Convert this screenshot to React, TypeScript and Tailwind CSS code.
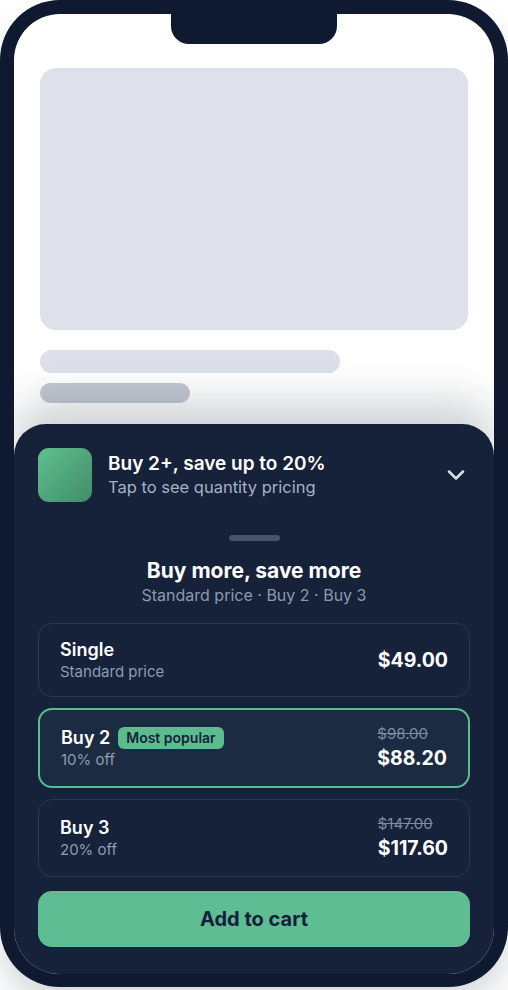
import { ChevronDown } from "lucide-react";

const TIERS = [
  { label: "Single", sub: "Standard price", price: "$49.00", was: null, popular: false },
  { label: "Buy 2", sub: "10% off", price: "$88.20", was: "$98.00", popular: true },
  { label: "Buy 3", sub: "20% off", price: "$117.60", was: "$147.00", popular: false },
];

export default function App() {
  return (
    <div className="w-[508px] h-[990px] bg-white overflow-hidden font-['Inter',sans-serif]">
      <div className="w-[508px] h-[987px] rounded-[60px] bg-[#0f1930] p-[14px] pb-[13px] shadow-[0_18px_30px_rgba(15,23,42,0.16)]">
        <div className="relative h-full rounded-[46px] bg-white overflow-hidden flex flex-col">
          {/* notch */}
          <div className="absolute top-0 left-1/2 -translate-x-1/2 w-[166px] h-[30px] rounded-b-[18px] bg-[#0f1930]" />

          {/* page skeleton */}
          <div className="px-[26px] pt-[54px]">
            <div className="h-[262px] rounded-2xl bg-[#dee1e9]" />
            <div className="mt-5 h-[23px] w-[300px] rounded-full bg-[#dde0e8]" />
            <div className="mt-[10px] h-[20px] w-[150px] rounded-full bg-[#c3c8d2]" />
          </div>

          {/* bottom sheet */}
          <div className="mt-[21px] flex-1 rounded-t-[32px] bg-[#16213a] shadow-[0_-22px_44px_rgba(15,23,42,0.2)] px-6 pt-6">
            <div className="flex items-center">
              <div className="w-[54px] h-[54px] rounded-[11px] bg-linear-to-br from-[#5fc190] to-[#428c68] shrink-0" />
              <div className="ml-4 flex-1">
                <div className="text-[19px] leading-6 font-semibold text-white">Buy 2+, save up to 20%</div>
                <div className="text-[16.5px] leading-[22px] text-[#a6b1c6]">Tap to see quantity pricing</div>
              </div>
              <ChevronDown size={28} strokeWidth={2.2} className="text-[#d9dee8]" />
            </div>

            <div className="mt-[33px] mx-auto w-[51px] h-[6px] rounded-full bg-[#46536f]" />

            <div className="mt-4 text-center">
              <div className="text-[21px] leading-7 font-bold text-white">Buy more, save more</div>
              <div className="text-[16px] leading-5 text-[#8c99b3]">Standard price · Buy 2 · Buy 3</div>
            </div>

            <div className="mt-[18px] flex flex-col gap-[11px]">
              {TIERS.map((t) => (
                <div
                  key={t.label}
                  className={
                    t.popular
                      ? "flex items-center justify-between rounded-[14px] border-2 border-[#5bbd8d] bg-[#1b2c42] px-[21px] py-[14px]"
                      : "flex items-center justify-between rounded-[14px] border-[1.5px] border-[#2b3659] px-[21px] py-[14px]"
                  }
                >
                  <div>
                    <div className="flex items-center gap-2">
                      <span className="text-[18px] leading-6 font-semibold text-white">{t.label}</span>
                      {t.popular && (
                        <span className="rounded-md bg-[#5bbd8d] px-2 text-[14px] leading-[22px] font-semibold text-[#13233a]">
                          Most popular
                        </span>
                      )}
                    </div>
                    <div className="text-[15px] leading-5 text-[#8e9bb4]">{t.sub}</div>
                  </div>
                  <div>
                    {t.was && (
                      <div className="text-[15px] leading-5 text-[#7f8ba3] line-through">{t.was}</div>
                    )}
                    <div className="text-[19.5px] leading-7 font-bold text-white">{t.price}</div>
                  </div>
                </div>
              ))}
            </div>

            <button className="mt-[14px] w-full h-[56px] rounded-[14px] bg-[#5ebd92] text-[20px] font-bold text-[#13203a]">
              Add to cart
            </button>
          </div>
        </div>
      </div>
    </div>
  );
}
